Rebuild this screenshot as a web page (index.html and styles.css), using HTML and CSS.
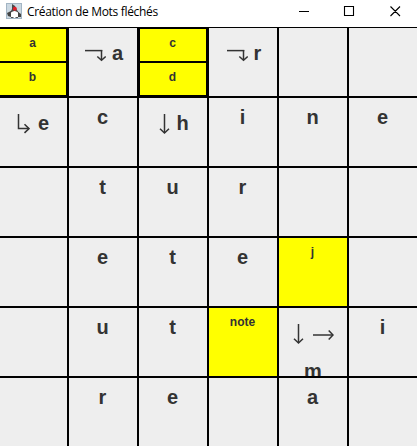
FILE: index.html
```
<!DOCTYPE html>
<html lang="fr">
<head>
<meta charset="utf-8">
<title>Création de Mots fléchés</title>
<link rel="stylesheet" href="styles.css">
</head>
<body>
<svg class="defs" aria-hidden="true">
  <symbol id="right-down" viewBox="0 0 21 23"><path d="M0 8.6H17.3"/><path d="M16.5 8V18"/><path d="M12.3 14.5L16.5 18.3L20.7 14.5"/></symbol>
  <symbol id="down-right" viewBox="0 0 13 23"><path d="M1.5 2V16.6H12"/><path d="M7.5 12.3L12 16.6L7.5 20.9"/></symbol>
  <symbol id="down" viewBox="0 0 11 23"><path d="M5.5 2V21"/><path d="M1 16.8L5.5 21L10 16.8"/></symbol>
  <symbol id="right" viewBox="0 0 21 23"><path d="M0 13H20"/><path d="M15.7 8.5L20 13L15.7 17.5"/></symbol>
</svg>
<header class="titlebar">
  <svg class="logo" viewBox="0 0 16 16">
    <rect width="16" height="16" fill="#a3b5c4"/>
    <rect x="1" y="1" width="14" height="14" fill="#cbd8e2"/>
    <path d="M6 1L9 3L11 7L13 10H4L6 6Z" fill="#4a4a4a"/>
    <path d="M1 10L5 8L5 14L2 13Z" fill="#444"/>
    <path d="M12 9L15 11L15 14L12 14Z" fill="#444"/>
    <path d="M5 9.5Q8.5 6.5 12 9.5V14Q8.5 16 5 14Z" fill="#fff"/>
    <path d="M5 14.5H7.5M9.5 14.5H12" stroke="#555"/>
    <circle cx="8.8" cy="5.8" r="2" fill="#e0202a"/>
  </svg>
  <h1 class="title">Création de Mots fléchés</h1>
  <svg class="controls" viewBox="0 0 110 23"><path d="M0 11.5H10M45.5 6.5H54.5V15.5H45.5ZM91.5 6.5L101 16M101 6.5L91.5 16" fill="none" stroke="#000" stroke-width="1.1"/></svg>
</header>
<main class="board">
  <div class="cell split"><div class="clue">a</div><div class="clue">b</div></div>
  <div class="cell marked"><svg class="wide"><use href="#right-down"/></svg><span>a</span></div>
  <div class="cell split"><div class="clue">c</div><div class="clue">d</div></div>
  <div class="cell marked"><svg class="wide"><use href="#right-down"/></svg><span>r</span></div>
  <div class="cell"></div>
  <div class="cell"></div>

  <div class="cell marked"><svg class="bend"><use href="#down-right"/></svg><span>e</span></div>
  <div class="cell">c</div>
  <div class="cell marked"><svg class="narrow"><use href="#down"/></svg><span>h</span></div>
  <div class="cell">i</div>
  <div class="cell">n</div>
  <div class="cell">e</div>

  <div class="cell"></div>
  <div class="cell">t</div>
  <div class="cell">u</div>
  <div class="cell">r</div>
  <div class="cell"></div>
  <div class="cell"></div>

  <div class="cell"></div>
  <div class="cell">e</div>
  <div class="cell">t</div>
  <div class="cell">e</div>
  <div class="cell definition">j</div>
  <div class="cell"></div>

  <div class="cell"></div>
  <div class="cell">u</div>
  <div class="cell">t</div>
  <div class="cell definition">note</div>
  <div class="cell marked wrapped"><svg class="narrow"><use href="#down"/></svg><svg class="wide"><use href="#right"/></svg><span>m</span></div>
  <div class="cell">i</div>

  <div class="cell"></div>
  <div class="cell">r</div>
  <div class="cell">e</div>
  <div class="cell"></div>
  <div class="cell">a</div>
  <div class="cell"></div>
</main>
</body>
</html>
```
FILE: styles.css
```
* { box-sizing: border-box; }

body {
  margin: 0;
  height: 446px;
  overflow: hidden;
  background: #fff;
  color: #333;
  font-family: "Liberation Sans", Arial, sans-serif;
}

.defs { display: none; }

symbol path {
  fill: none;
  stroke: #333;
  stroke-width: 1.5;
}

.titlebar {
  display: flex;
  height: 27px;
  padding-left: 6px;
  align-items: flex-start;
}

.logo {
  width: 16px;
  height: 16px;
  margin-top: 3px;
}

.title {
  flex: 1;
  margin: 0 0 0 5px;
  color: #000;
  font: 400 12px/23px "Open Sans", sans-serif;
  letter-spacing: -0.32px;
  white-space: nowrap;
}

.controls {
  width: 110px;
  height: 23px;
  margin-right: 8px;
}

.board {
  display: grid;
  grid-template-columns: repeat(6, 70px);
  grid-auto-rows: 70px;
  margin-left: -2px;
}

.cell {
  overflow: hidden;
  padding-top: 8px;
  padding-right: 1px;
  border: 1px solid #000;
  background: #eee;
  font-size: 20px;
  font-weight: 700;
  line-height: 23px;
  text-align: center;
}

.definition {
  padding-top: 7px;
  background: #ff0;
  font-size: 12px;
  line-height: 14px;
}

.split {
  display: grid;
  grid-template-rows: 1fr 1fr;
  padding: 0;
}

.clue {
  padding-top: 7px;
  padding-right: 1px;
  border: 1px solid #000;
  background: #ff0;
  font-size: 12px;
  line-height: 14px;
}

.marked {
  display: flex;
  justify-content: center;
  align-items: flex-start;
  column-gap: 6px;
  padding: 14px 0 0 2px;
}

.marked svg { height: 23px; flex: none; }
.wide { width: 21px; }
.narrow { width: 11px; }
.bend { width: 13px; }

.bend {
  margin-left: -2px;
}

.bend + span { margin-left: 2px; }

.wrapped {
  flex-wrap: wrap;
  row-gap: 15px;
  column-gap: 9px;
  align-content: flex-start;
  padding-left: 0;
}

.wrapped span {
  width: 100%;
}
```
